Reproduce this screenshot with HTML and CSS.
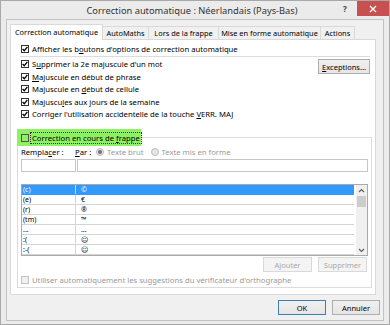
FILE: index.html
```html
<!DOCTYPE html>
<html lang="fr">
<head>
  <meta charset="UTF-8" />
  <title>Correction automatique</title>
  <link rel="stylesheet" href="styles.css">
</head>
<body>
  <div class="window">
    <div class="titlebar">
      <span class="title">Correction automatique : Néerlandais (Pays-Bas)</span>
      <span class="help">?</span>
      <span class="close">
        <svg width="8" height="8" viewBox="0 0 8 8"><path d="M1 1 L7 7 M7 1 L1 7" stroke="#fff" stroke-width="1.4"/></svg>
      </span>
    </div>

    <div class="client">
      <div class="tabs">
        <div class="tab active" style="width: 93px">Correction automatique</div>
        <div class="tab" style="width: 47px">AutoMaths</div>
        <div class="tab" style="width: 71px">Lors de la frappe</div>
        <div class="tab" style="width: 103px">Mise en forme automatique</div>
        <div class="tab" style="width: 35px">Actions</div>
      </div>

      <div class="panel">
        <div class="check-row top-row">
          <span class="cb checked"><svg width="6" height="6" viewBox="0 0 6 6"><path d="M0.6 3 L2.3 4.7 L5.4 0.9" fill="none" stroke="#000" stroke-width="1.3"/></svg></span>
          <span>Afficher les b<u>o</u>utons d'options de correction automatique</span>
        </div>
        <div class="sep"></div>

        <div class="options">
          <div class="checks">
            <div class="check-row">
              <span class="cb checked"><svg width="6" height="6" viewBox="0 0 6 6"><path d="M0.6 3 L2.3 4.7 L5.4 0.9" fill="none" stroke="#000" stroke-width="1.3"/></svg></span>
              <span>S<u>u</u>pprimer la 2e majuscule d'un mot</span>
            </div>
            <div class="check-row">
              <span class="cb checked"><svg width="6" height="6" viewBox="0 0 6 6"><path d="M0.6 3 L2.3 4.7 L5.4 0.9" fill="none" stroke="#000" stroke-width="1.3"/></svg></span>
              <span><u>M</u>ajuscule en début de phrase</span>
            </div>
            <div class="check-row">
              <span class="cb checked"><svg width="6" height="6" viewBox="0 0 6 6"><path d="M0.6 3 L2.3 4.7 L5.4 0.9" fill="none" stroke="#000" stroke-width="1.3"/></svg></span>
              <span>Majuscule en <u>d</u>ébut de cellule</span>
            </div>
            <div class="check-row">
              <span class="cb checked"><svg width="6" height="6" viewBox="0 0 6 6"><path d="M0.6 3 L2.3 4.7 L5.4 0.9" fill="none" stroke="#000" stroke-width="1.3"/></svg></span>
              <span>Majuscu<u>l</u>es aux jours de la semaine</span>
            </div>
            <div class="check-row">
              <span class="cb checked"><svg width="6" height="6" viewBox="0 0 6 6"><path d="M0.6 3 L2.3 4.7 L5.4 0.9" fill="none" stroke="#000" stroke-width="1.3"/></svg></span>
              <span>Corriger l'utilisation accidentelle de la touche <u>V</u>ERR. MAJ</span>
            </div>
          </div>
          <button class="btn exceptions"><u>E</u>xceptions...</button>
        </div>

        <div class="group">
          <div class="group-title">
            <span class="cb"></span>
            <span class="focus">Correction en cours de <u>f</u>rappe</span>
          </div>

          <div class="labels">
            <span class="lbl-left">Rempla<u>c</u>er :</span>
            <span class="lbl-par"><u>P</u>ar :</span>
            <span class="radio on"></span>
            <span class="muted">Texte brut</span>
            <span class="radio"></span>
            <span class="muted">Texte mis en forme</span>
          </div>

          <div class="inputs">
            <div class="field field-left"></div>
            <div class="field field-right"></div>
          </div>

          <div class="list">
            <div class="rows">
              <div class="lrow selected"><span class="c1">(c)</span><span class="c2">©</span></div>
              <div class="lrow"><span class="c1">(e)</span><span class="c2">€</span></div>
              <div class="lrow"><span class="c1">(r)</span><span class="c2">®</span></div>
              <div class="lrow"><span class="c1">(tm)</span><span class="c2">™</span></div>
              <div class="lrow"><span class="c1">...</span><span class="c2">…</span></div>
              <div class="lrow"><span class="c1">:(</span><span class="c2">☹</span></div>
              <div class="lrow"><span class="c1">:-(</span><span class="c2">☹</span></div>
            </div>
            <div class="scrollbar">
              <svg width="7" height="5" viewBox="0 0 7 5"><path d="M1 4 L3.5 1.5 L6 4" fill="none" stroke="#606060" stroke-width="1.2"/></svg>
              <div class="thumb"></div>
              <div class="track"></div>
              <svg width="7" height="5" viewBox="0 0 7 5"><path d="M1 1 L3.5 3.5 L6 1" fill="none" stroke="#606060" stroke-width="1.2"/></svg>
            </div>
          </div>

          <div class="list-actions">
            <button class="btn disabled">Ajouter</button>
            <button class="btn disabled">Supprimer</button>
          </div>

          <div class="check-row disabled-row">
            <span class="cb off"></span>
            <span class="muted">Utiliser automatiquement les suggestions du vérificateur d'orthographe</span>
          </div>
        </div>
      </div>

      <div class="footer">
        <button class="btn default">OK</button>
        <button class="btn">Annuler</button>
      </div>
    </div>
  </div>
</body>
</html>
```

FILE: styles.css
```css
* {
  box-sizing: border-box;
}

body {
  margin: 0;
  font-family: 'Noto Sans', 'Open Sans', sans-serif;
  font-size: 7.7px;
  color: #000;
  background: #fff;
}

u {
  text-decoration: underline;
  text-underline-offset: 1px;
}

.window {
  width: 390px;
  height: 325px;
  background: #ebebeb;
  border: 1px solid #a9a9a9;
  display: flex;
  flex-direction: column;
}

/* TITLE BAR */
.titlebar {
  height: 18px;
  display: flex;
  align-items: flex-start;
}

.title {
  flex: 1;
  text-align: center;
  font-size: 9.3px;
  color: #333;
  padding-left: 44px;
  line-height: 19px;
}

.help {
  width: 12px;
  margin-right: 6px;
  font-size: 8px;
  font-weight: bold;
  color: #444;
  line-height: 15px;
  text-align: center;
}

.close {
  width: 32px;
  height: 15px;
  background: #c75050;
  display: flex;
  align-items: center;
  justify-content: center;
}

/* CLIENT AREA */
.client {
  flex: 1;
  margin: 0 5px 3px 5px;
  border: 1px solid #c3c3c3;
  background: #f0f0f0;
  padding: 4px 7px 0 3px;
  display: flex;
  flex-direction: column;
}

.tabs {
  display: flex;
  align-items: flex-end;
  height: 15px;
}

.tab {
  height: 13px;
  border: 1px solid #d9d9d9;
  border-bottom: none;
  margin-left: -1px;
  background: #f0f0f0;
  display: flex;
  align-items: center;
  justify-content: center;
  white-space: nowrap;
  font-size: 7.4px;
}

.tab:first-child {
  margin-left: 0;
}

.tab.active {
  height: 16px;
  margin-bottom: -1px;
  background: #fff;
  position: relative;
  padding-bottom: 2px;
}

.panel {
  height: 256px;
  background: #fff;
  border: 1px solid #d9d9d9;
  padding: 2px 3px 0 6px;
}

.check-row {
  display: flex;
  align-items: center;
  gap: 3px;
  white-space: nowrap;
}

.cb {
  width: 8px;
  height: 8px;
  border: 1px solid #333;
  background: #fff;
  display: flex;
  align-items: center;
  justify-content: center;
  flex-shrink: 0;
}

.cb.off {
  border-color: #c4c4c4;
  background: #f0f0f0;
}

.top-row {
  height: 14px;
  padding-left: 4px;
}

.sep {
  height: 1px;
  background: #dcdcdc;
  margin: 0 2px 1px 3px;
}

.options {
  display: flex;
  justify-content: space-between;
  align-items: flex-start;
  padding-left: 4px;
  height: 72px;
}

.checks .check-row {
  height: 12.5px;
}

.btn {
  font-family: inherit;
  font-size: 7.5px;
  height: 15px;
  padding: 0;
  border: 1px solid #adadad;
  background: linear-gradient(#f0f0f0, #e5e5e5);
  color: #000;
}

.exceptions {
  width: 52px;
  margin-top: 1px;
  margin-right: 2px;
}

/* GROUP */
.group {
  margin-top: 7px;
  height: 151px;
  border: 1px solid #dcdcdc;
  padding: 0 3px 0 3px;
}

.group-title {
  display: flex;
  align-items: center;
  gap: 1px;
  width: 124px;
  height: 17px;
  margin: -9px 0 0 -4px;
  padding-left: 4px;
  background: #8ff064;
}

.group-title .cb {
  border-color: #555;
  background: transparent;
}

.focus {
  border: 1px dotted #333;
  padding: 0 1px;
  line-height: 10px;
  white-space: nowrap;
}

.labels {
  display: flex;
  align-items: center;
  height: 12px;
  white-space: nowrap;
}

.lbl-left {
  width: 54px;
}

.lbl-par {
  width: 21px;
}

.radio {
  width: 8px;
  height: 8px;
  border-radius: 50%;
  border: 1px solid #bcbcbc;
  background: #e6e6e6;
  margin-right: 3px;
  display: flex;
  align-items: center;
  justify-content: center;
}

.radio.on::after {
  content: '';
  width: 4px;
  height: 4px;
  border-radius: 50%;
  background: #707070;
}

.muted {
  color: #9a9a9a;
  margin-right: 7px;
}

.inputs {
  display: flex;
  gap: 1px;
  margin-top: 1px;
}

.field {
  height: 13px;
  border: 1px solid #c6c6c6;
  background: #fff;
}

.field-left {
  width: 55px;
}

.field-right {
  flex: 1;
}

/* LIST */
.list {
  margin-top: 12px;
  height: 72px;
  border: 1px solid #a9a9a9;
  display: flex;
  font-size: 7px;
}

.rows {
  flex: 1;
  padding-right: 2px;
}

.lrow {
  height: 10px;
  display: flex;
  align-items: center;
  border-bottom: 1px solid #d4d4d4;
}

.lrow.selected {
  background: #3399ff;
  color: #fff;
  border-bottom-color: #3399ff;
}

.c1 {
  width: 54px;
  height: 100%;
  padding-left: 1px;
  border-right: 1px solid #d4d4d4;
  display: flex;
  align-items: center;
}

.c2 {
  padding-left: 5px;
}

.scrollbar {
  width: 11px;
  background: #f0f0f0;
  display: flex;
  flex-direction: column;
  align-items: center;
  padding: 3px 0 2px;
}

.thumb {
  width: 9px;
  height: 11px;
  margin-top: 3px;
  background: #cdcdcd;
}

.track {
  flex: 1;
}

.list-actions {
  display: flex;
  justify-content: flex-end;
  gap: 6px;
  margin-top: 1px;
  padding-right: 1px;
}

.btn.disabled {
  width: 49px;
  border-color: #d9d9d9;
  background: #f4f4f4;
  color: #a8a8a8;
}

.disabled-row {
  height: 13px;
  margin-top: 1px;
}

/* FOOTER */
.footer {
  display: flex;
  justify-content: flex-end;
  gap: 6px;
  margin: 5px -4px 0 0;
}

.footer .btn {
  width: 48px;
}

.btn.default {
  border-color: #3c7fb1;
}
```
